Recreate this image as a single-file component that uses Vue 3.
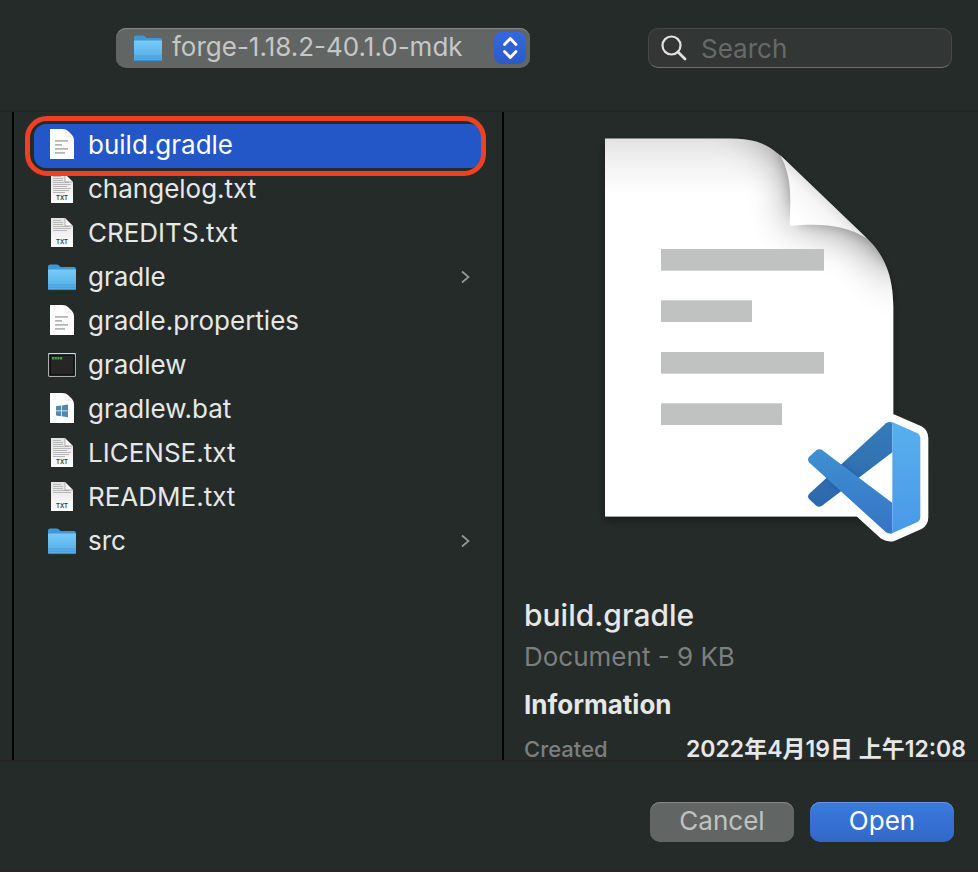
<script setup>
import { ref, computed } from 'vue'

const files = [
  { name: 'build.gradle', kind: 'doc' },
  { name: 'changelog.txt', kind: 'txt', text: 9 },
  { name: 'CREDITS.txt', kind: 'txt', text: 6 },
  { name: 'gradle', kind: 'folder' },
  { name: 'gradle.properties', kind: 'doc' },
  { name: 'gradlew', kind: 'exec' },
  { name: 'gradlew.bat', kind: 'bat' },
  { name: 'LICENSE.txt', kind: 'txt', text: 9 },
  { name: 'README.txt', kind: 'txt', text: 5 },
  { name: 'src', kind: 'folder' },
]
const lineWidths = [13, 15, 15, 16, 18, 14, 18, 16, 12]

const selectedName = ref('build.gradle')
const query = ref('')
const selected = computed(() => files.find((f) => f.name === selectedName.value))
</script>

<template>
  <div class="dialog">
    <svg class="defs" width="0" height="0" aria-hidden="true">
      <defs>
        <linearGradient id="folderFront" x1="0" y1="0" x2="0" y2="1">
          <stop offset="0" stop-color="#78cbf8" />
          <stop offset="1" stop-color="#51aae6" />
        </linearGradient>
        <linearGradient id="txtPage" x1="0" y1="0" x2="0" y2="1">
          <stop offset="0" stop-color="#e2e2e2" />
          <stop offset="1" stop-color="#ffffff" />
        </linearGradient>
        <symbol id="icon-folder" viewBox="0 0 28 28">
          <path d="M0 3.5Q0 1.5 2 1.5H8.5Q10 1.5 11 2.5L12.5 4H26Q28 4 28 6V12H0Z" fill="#3f97d6" />
          <path d="M0 7.6Q0 6.6 1 6.6H27Q28 6.6 28 7.6V25.5Q28 27 26.5 27H1.5Q0 27 0 25.5Z" fill="url(#folderFront)" />
          <path d="M0 22H28M0 24.2H28" stroke="#3f94d2" stroke-width=".6" />
          <path d="M.5 26.6H27.5" stroke="#3484c2" stroke-width=".8" />
        </symbol>
        <symbol id="icon-doc" viewBox="0 0 28 32">
          <path d="M2 1H14C17 1 18.500 1.800 20.500 3.500L23 6C25 8 26 9.500 26 13V31H2Z" fill="#fff" />
          <path d="M14.500 1C17.500 1.500 17.600 4 17.600 8.500C21 8.200 24 8.600 25.500 10.500" fill="#dfdfdf" />
          <path d="M18.500 2.200L18 8L23.500 7Z" fill="#fff" />
        </symbol>
      </defs>
    </svg>

    <header class="toolbar">
      <div class="location">
        <svg class="location-folder" viewBox="0 0 28 28" aria-hidden="true"><use href="#icon-folder" /></svg>
        <select class="location-select" aria-label="Location">
          <option>forge-1.18.2-40.1.0-mdk</option>
        </select>
        <svg class="location-stepper" viewBox="0 0 32 32" aria-hidden="true">
          <defs>
            <linearGradient id="stepper" x1="0" y1="0" x2="0" y2="1">
              <stop offset="0" stop-color="#3568e0" />
              <stop offset="1" stop-color="#2a5bc8" />
            </linearGradient>
          </defs>
          <rect width="32" height="32" rx="8" fill="url(#stepper)" />
          <path d="M10.500 12.500L16.300 6.500L22 12.500M10.500 19.500L16.300 25.500L22 19.500" fill="none" stroke="#fff" stroke-width="2.800" stroke-linecap="round" stroke-linejoin="round" />
        </svg>
      </div>
      <label class="search">
        <svg viewBox="0 0 26 26" aria-hidden="true">
          <circle cx="10.500" cy="10.500" r="9" fill="none" stroke="#e2e2e2" stroke-width="2.200" />
          <path d="M17 17L24 24" stroke="#e2e2e2" stroke-width="2.800" stroke-linecap="round" />
        </svg>
        <input v-model="query" type="search" placeholder="Search" aria-label="Search" />
      </label>
    </header>

    <main class="browser">
      <section class="files">
        <ul>
          <li v-for="file in files" :key="file.name">
            <button
              type="button"
              class="file"
              :class="{ selected: file.name === selectedName }"
              @click="selectedName = file.name"
            >
              <svg v-if="file.kind === 'folder'" class="file-icon" viewBox="0 0 28 32" aria-hidden="true">
                <use href="#icon-folder" y="2" width="28" height="28" />
              </svg>
              <svg v-else-if="file.kind === 'doc'" class="file-icon" viewBox="0 1 28 32" aria-hidden="true">
                <use href="#icon-doc" width="28" height="32" />
                <path d="M7 12.800H20M7 16.800H14M7 20.800H20M7 24.800H17" stroke="#b4b6b5" stroke-width="1.700" />
              </svg>
              <svg v-else-if="file.kind === 'bat'" class="file-icon" viewBox="0 1 28 32" aria-hidden="true">
                <use href="#icon-doc" width="28" height="32" />
                <path d="M8 14.300L13 13.500V18.500H8ZM13.700 13.400L20 12.500V18.500H13.700ZM8 19.200H13V24.200L8 23.500ZM13.700 19.200H20V25.200L13.700 24.300Z" fill="#5488ab" />
              </svg>
              <svg v-else-if="file.kind === 'exec'" class="file-icon" viewBox="0 0 28 32" aria-hidden="true">
                <rect x=".6" y="4.600" width="26.800" height="22.800" rx=".8" fill="#1b1b1b" stroke="#a9b0b0" stroke-width="1.200" />
                <path d="M.5 4.600H27.500" stroke="#c8e0e4" stroke-width="1.200" />
                <rect x="2" y="6" width="24" height="20" fill="#262626" stroke="#000" stroke-width="1" />
                <path d="M4 9.300H14.500" stroke="#48a04a" stroke-width="2.400" stroke-dasharray="2.100 .6" />
              </svg>
              <svg v-else class="file-icon" viewBox="0 1 28 32" aria-hidden="true">
                <path d="M3 2H17L25 10V31H3Z" fill="url(#txtPage)" />
                <path
                  v-for="n in file.text"
                  :key="n"
                  :d="`M5 ${2.5 + n * 2}H${n < 4 ? lineWidths[n - 1] : lineWidths[n - 1] + 5}`"
                  stroke="#b8b8b8"
                  stroke-width="1"
                />
                <path d="M17 2L25 10H17Z" fill="#fafafa" stroke="#8f8f8f" stroke-width=".7" />
                <rect x="7" y="22" width="14" height="7" fill="#f8f8f8" />
                <text x="14" y="28" text-anchor="middle" class="badge">TXT</text>
              </svg>
              <span class="file-name">{{ file.name }}</span>
              <svg v-if="file.kind === 'folder'" class="chevron" viewBox="0 0 10 14" aria-hidden="true">
                <path d="M2 1.500L8.500 7L2 12.500" fill="none" stroke="#979a99" stroke-width="1.700" />
              </svg>
            </button>
          </li>
        </ul>
        <div class="highlight" aria-hidden="true"></div>
      </section>

      <section class="preview">
        <svg class="preview-art" viewBox="0 0 400 420" role="img" aria-label="Document preview">
          <defs>
            <linearGradient id="pageTop" x1="0" y1="0" x2="0" y2="1">
              <stop offset="0" stop-color="#e2e2e2" />
              <stop offset=".06" stop-color="#f1f1f1" />
              <stop offset=".15" stop-color="#ffffff" />
            </linearGradient>
            <linearGradient id="fold" gradientUnits="userSpaceOnUse" x1="285" y1="64" x2="258" y2="92">
              <stop offset="0" stop-color="#dedede" />
              <stop offset=".35" stop-color="#f6f6f6" />
              <stop offset="1" stop-color="#ffffff" />
            </linearGradient>
            <linearGradient id="codePanel" x1="0" y1="0" x2="0" y2="1">
              <stop offset="0" stop-color="#58b0ee" />
              <stop offset="1" stop-color="#4a98e8" />
            </linearGradient>
            <linearGradient id="codeDark" x1="0" y1="0" x2="0" y2="1">
              <stop offset="0" stop-color="#357cb9" />
              <stop offset="1" stop-color="#2c68ac" />
            </linearGradient>
            <linearGradient id="codeLight" x1="0" y1="0" x2="0" y2="1">
              <stop offset="0" stop-color="#3f90d1" />
              <stop offset="1" stop-color="#3574c6" />
            </linearGradient>
            <filter id="soft" x="-50%" y="-50%" width="200%" height="200%"><feGaussianBlur stdDeviation="20" /></filter>
            <filter id="softer" x="-50%" y="-50%" width="200%" height="200%"><feGaussianBlur stdDeviation="6" /></filter>
            <filter id="drop" x="-10%" y="-10%" width="120%" height="120%"><feDropShadow dx="0" dy="4" stdDeviation="4" flood-opacity=".35" /></filter>
            <clipPath id="page"><path d="M64 8.500H189C212 8.500 226 13 241 27L324 106.500C343 124 352.300 145 352.300 177V386.500H64Z" /></clipPath>
            <clipPath id="crossing"><path d="M42 171L64 151Q72 145 80 149L292 309V400L42 187Z M273 70L292 67V157L80 318L42 297V282Z" /></clipPath>
          </defs>
          <path filter="url(#drop)" fill="url(#pageTop)" d="M64 8.500H189C212 8.500 226 13 241 27L324 106.500C343 124 352.300 145 352.300 177V386.500H64Z" />
          <g clip-path="url(#page)">
            <path d="M190 -10C225 0 244 20 250 45L249 96C290 90 320 100 362 160V60L260 -20Z" fill="#000" opacity=".42" filter="url(#soft)" />
            <path d="M238 25C245 36 249.500 48 249.300 72L262 94C286 93 304 96 326 110L350 140L360 100L250 10Z" fill="#000" opacity=".2" filter="url(#softer)" />
          </g>
          <path d="M239 25C245 36 249.500 48 249.300 72L248.700 96C280 93 304 95 326 108.500Z" fill="url(#fold)" />
          <g fill="#c0c2c1">
            <rect x="120" y="119" width="163" height="21.700" />
            <rect x="120" y="170.300" width="91" height="21.700" />
            <rect x="120" y="222" width="163" height="21.700" />
            <rect x="120" y="273.300" width="121" height="21.700" />
          </g>
          <g transform="translate(254 270) scale(.3333)">
            <path d="M292 67L368 100Q376 105 376 114V352Q376 362 368 366L292 400Q281 402 273 397L42 187Q36 179 42 171L273 70Q281 64 292 67Z" fill="#fff" stroke="#fff" stroke-width="48" stroke-linejoin="round" />
            <path d="M273 70Q281 64 292 67V157L80 318Q72 323 64 317L42 297Q36 290 42 282Z" fill="url(#codeDark)" />
            <g clip-path="url(#crossing)">
              <path d="M80 149L292 309V400Q281 402 273 397L42 187" fill="none" stroke="#1d4f98" stroke-width="12" opacity=".4" filter="url(#softer)" />
            </g>
            <path d="M42 187Q36 179 42 171L64 151Q72 145 80 149L292 309V400Q281 402 273 397Z" fill="url(#codeLight)" />
            <path d="M291 66L368 100Q376 105 376 114V352Q376 362 368 366L291 400Q287 402 284 400Q292 396 292 389V77Q292 69 284 66Q288 65 291 66Z" fill="url(#codePanel)" />
          </g>
        </svg>

        <h1>{{ selected.name }}</h1>
        <p class="kind">Document - 9 KB</p>
        <h2>Information</h2>
        <dl>
          <dt>Created</dt>
          <dd>2022年4月19日 上午12:08</dd>
        </dl>
      </section>
    </main>

    <footer class="actions">
      <button type="button" class="action cancel">Cancel</button>
      <button type="button" class="action open">Open</button>
    </footer>
  </div>
</template>

<style>
body {
  background: #252b29;
}
</style>

<style scoped>
.dialog {
  box-sizing: border-box;
  display: flex;
  flex-direction: column;
  height: 100vh;
  border-bottom: 2px solid #2a2526;
  background: #252b29;
  color: #e6e7e7;
  font-family: Inter, "Noto Sans CJK TC", sans-serif;
  font-size: 26px;
  line-height: 32px;
}

.defs {
  position: absolute;
}

button,
select,
input {
  font: inherit;
}

.toolbar {
  display: flex;
  flex: none;
  justify-content: space-between;
  gap: 24px;
  padding: 28px 26px 42px 116px;
  border-bottom: 2px solid #232323;
}

.location {
  position: relative;
  flex: 0 1 414px;
}

.location-select {
  appearance: none;
  box-sizing: border-box;
  width: 100%;
  height: 40px;
  padding: 0 40px 2px 56px;
  border: 0;
  border-radius: 10px;
  background: #616664;
  box-shadow: inset 0 1px #858988;
  color: #c6c7c7;
}

.location-folder {
  position: absolute;
  top: 6px;
  left: 18px;
  width: 28px;
  height: 28px;
  pointer-events: none;
}

.location-stepper {
  position: absolute;
  top: 4px;
  right: 4px;
  width: 32px;
  height: 32px;
  pointer-events: none;
}

.search {
  box-sizing: border-box;
  display: flex;
  flex: 0 1 304px;
  align-items: center;
  gap: 14px;
  min-width: 0;
  height: 40px;
  padding: 0 12px;
  border: 1px solid #444948;
  border-bottom-color: #6d7170;
  border-radius: 10px;
  background: #323736;
}

.search svg {
  flex: none;
  width: 26px;
  height: 26px;
}

.search input {
  flex: 1;
  min-width: 0;
  padding: 2px 0 0;
  border: 0;
  outline: 0;
  background: none;
  color: #e6e7e7;
}

.search input::placeholder {
  color: #666a69;
  opacity: 1;
}

.browser {
  display: flex;
  flex: 1;
  min-height: 0;
  padding-left: 12px;
  overflow: hidden;
}

.files {
  position: relative;
  box-sizing: border-box;
  flex: 0 0 492px;
  padding: 12px 20px;
  border: solid #000;
  border-width: 0 2px;
}

.files ul {
  margin: 0;
  padding: 0;
  list-style: none;
}

.file {
  display: flex;
  align-items: center;
  gap: 12px;
  width: 100%;
  height: 44px;
  padding: 0 12px 2px 14px;
  border: 0;
  border-radius: 12px;
  background: none;
  color: inherit;
  text-align: left;
}

.file.selected {
  background: #2357c8;
  color: #fff;
}

.file-icon {
  flex: none;
  width: 28px;
  height: 32px;
}

.badge {
  fill: #333;
  font-size: 6px;
  font-weight: 600;
}

.file-name {
  flex: 1;
}

.chevron {
  flex: none;
  width: 10px;
  height: 14px;
}

.highlight {
  position: absolute;
  top: 4px;
  right: 16px;
  left: 11px;
  box-sizing: border-box;
  height: 60px;
  border: 5px solid #ee4024;
  border-radius: 22px;
  pointer-events: none;
}

.preview {
  flex: 1;
  min-width: 0;
  padding: 18px 0 0 20px;
  overflow: hidden;
}

.preview-art {
  display: block;
  width: 400px;
  height: 420px;
  margin: 0 auto 47px 17px;
}

h1,
h2,
p,
dl,
dd {
  margin: 0;
}

h1 {
  font-size: 30px;
  font-weight: 500;
  line-height: 36px;
}

.kind {
  margin-top: 8px;
  color: #7c7f7e;
}

h2 {
  margin-top: 16px;
  font-size: 26px;
  font-weight: 700;
  line-height: 32px;
}

dl {
  display: flex;
  margin-top: 18px;
  font-size: 22px;
  line-height: 20px;
  white-space: nowrap;
}

dt {
  flex: none;
  width: 162px;
  color: #7c7f7e;
  font-weight: 500;
}

dd {
  font-size: 23px;
  font-weight: 600;
}

.actions {
  display: flex;
  flex: none;
  justify-content: flex-end;
  gap: 16px;
  padding: 40px 24px 28px;
  border-top: 2px solid #232323;
}

.action {
  width: 144px;
  height: 40px;
  padding: 0 0 2px;
  border: 0;
  border-radius: 10px;
}

.cancel {
  background: #616664;
  box-shadow: inset 0 1px #858988;
  color: #c0c2c1;
}

.open {
  background: linear-gradient(#3b7ae0, #3168c6);
  box-shadow: inset 0 1px #6598ea;
  color: #fff;
}
</style>
